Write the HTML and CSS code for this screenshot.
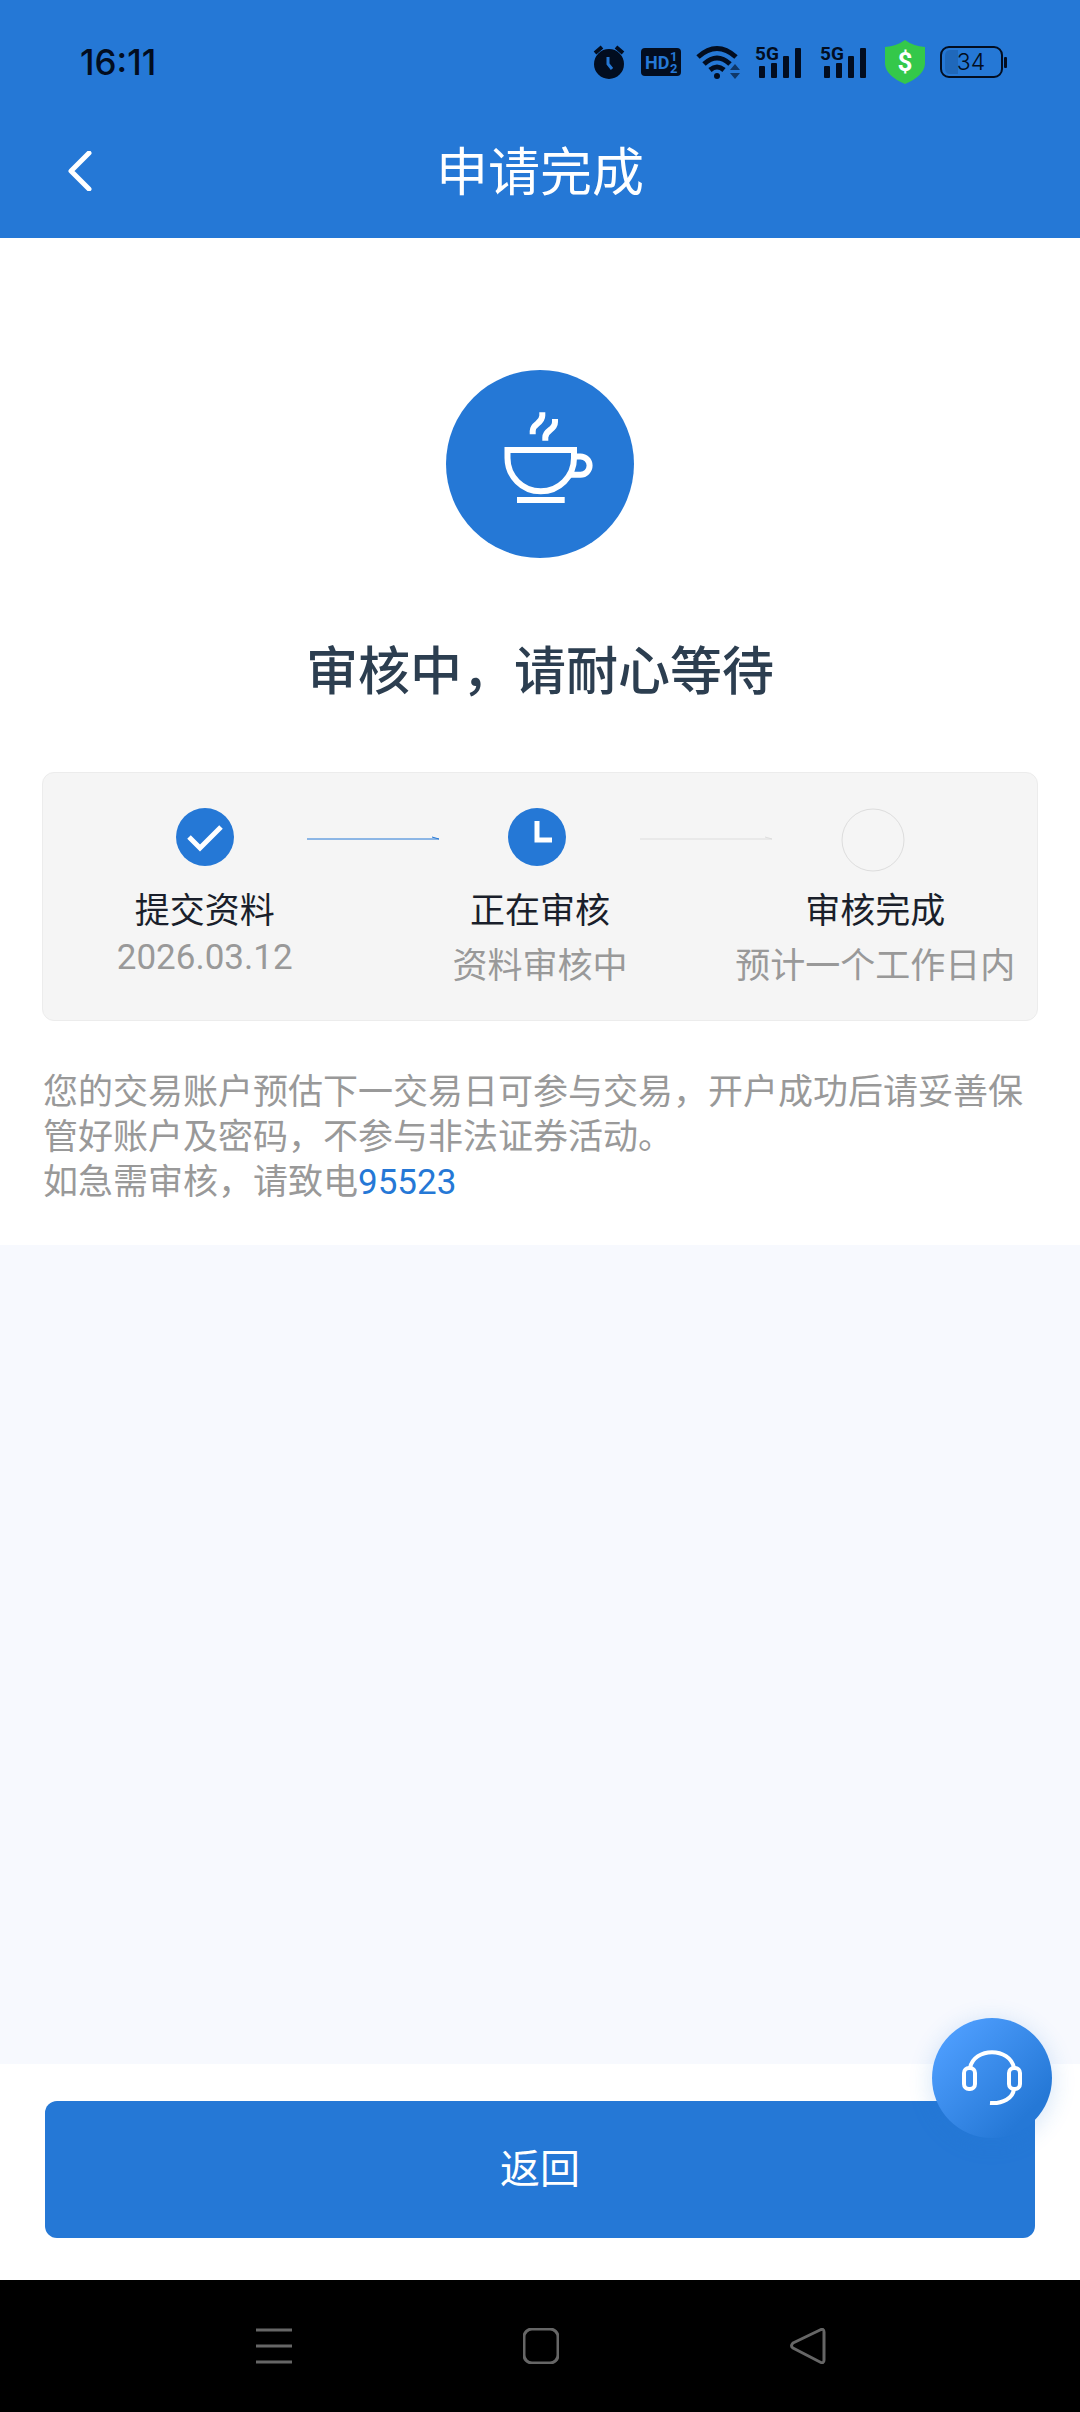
FILE: index.html
```html
<!DOCTYPE html>
<html lang="zh-CN">
<head>
  <meta charset="UTF-8" />
  <meta name="viewport" content="width=device-width, initial-scale=1.0"/>
  <title>申请完成</title>
  <link rel="stylesheet" href="styles.css">
</head>
<body>

  <header>
    <div class="status-bar">
      <span class="time">16:11</span>
      <div class="status-icons">
        <svg class="alarm" width="34" height="36" viewBox="0 0 34 36">
          <circle cx="17" cy="20" r="15"/>
          <path class="line" d="M3 9l7-6M31 9l-7-6" stroke-width="4"/>
          <path class="cut" d="M16 13v7l4 5" stroke-width="3"/>
        </svg>
        <svg class="hd" width="40" height="28" viewBox="0 0 40 28">
          <rect width="40" height="28" rx="4"/>
          <text class="cut-text" x="4" y="21" font-size="18">HD</text>
          <text class="cut-text" x="29" y="13" font-size="13">1</text>
          <text class="cut-text" x="29" y="25" font-size="13">2</text>
        </svg>
        <svg class="wifi" width="44" height="36" viewBox="0 0 44 36">
          <path class="line" d="M2 13Q21-4 40 13M8 20Q21 8 34 20M14 26Q21 20 28 26" stroke-width="5"/>
          <circle cx="21" cy="32" r="3"/>
          <path class="dim" d="M34 26l5-6 5 6zM34 29l5 6 5-6z"/>
        </svg>
        <svg class="signal" width="50" height="42" viewBox="0 -4 50 42">
          <text x="0" y="15" font-size="19">5G</text>
          <rect x="4" y="21" width="6" height="12" rx="1"/>
          <rect x="16" y="18" width="6" height="15" rx="1"/>
          <rect x="28" y="11" width="6" height="22" rx="1"/>
          <rect x="40" y="3" width="6" height="30" rx="1"/>
        </svg>
        <svg class="signal" width="50" height="42" viewBox="0 -4 50 42">
          <text x="0" y="15" font-size="19">5G</text>
          <rect x="4" y="21" width="6" height="12" rx="1"/>
          <rect x="16" y="18" width="6" height="15" rx="1"/>
          <rect x="28" y="11" width="6" height="22" rx="1"/>
          <rect x="40" y="3" width="6" height="30" rx="1"/>
        </svg>
        <svg class="shield" width="40" height="44" viewBox="0 0 40 44">
          <path d="M20 0Q28 6 40 7V24Q39 36 20 44Q1 36 0 24V7Q12 6 20 0Z"/>
          <text x="20" y="31" font-size="26" text-anchor="middle">$</text>
        </svg>
        <svg class="battery" width="68" height="32" viewBox="0 0 68 32">
          <path class="level" d="M10 4H18V28H10Q5 28 5 22V10Q5 4 10 4Z"/>
          <rect class="case" x="1" y="1" width="61" height="30" rx="8"/>
          <rect x="64" y="11" width="3" height="11" rx="1"/>
          <text x="31" y="24" font-size="23" text-anchor="middle">34</text>
        </svg>
      </div>
    </div>
    <div class="title-bar">
      <a class="back" href="#" aria-label="返回上一页">
        <svg width="24" height="40" viewBox="0 0 24 40">
          <path d="M21 2L3 20L21 38"/>
        </svg>
      </a>
      <h1>申请完成</h1>
    </div>
  </header>

  <main>
    <section class="result">
      <svg class="cup" width="188" height="188" viewBox="0 0 188 188">
        <circle cx="94" cy="94" r="94"/>
        <path d="M61.5 80H128V88A33.2 33.2 0 0 1 61.5 88Z"/>
        <path d="M128 86.5H134.5A9.1 9.1 0 0 1 134.5 104.7H124"/>
        <path d="M71 130H118.7"/>
        <path d="M86.7 64.3V61C86.7 53 96.3 54 96.3 45.5V42.3"/>
        <path d="M99.3 70.7V67.5C99.3 59.5 109 60.5 109 52V49"/>
      </svg>
      <h2>审核中，请耐心等待</h2>

      <div class="card">
        <div class="track">
          <svg class="mark" width="64" height="64" viewBox="0 0 64 64">
            <circle cx="30" cy="29" r="29"/>
            <path d="M14 29L25 40L46 19"/>
          </svg>
          <svg class="arrow" width="133" height="8" viewBox="0 0 133 8">
            <path d="M0 3H132L125 1"/>
          </svg>
          <svg class="mark" width="64" height="64" viewBox="0 0 64 64">
            <circle cx="29" cy="29" r="29"/>
            <path d="M29 13V32H44"/>
          </svg>
          <svg class="arrow next" width="133" height="8" viewBox="0 0 133 8">
            <path d="M0 3H132L125 1"/>
          </svg>
          <svg class="mark todo" width="64" height="64" viewBox="0 0 64 64">
            <circle cx="32" cy="32" r="31"/>
          </svg>
        </div>
        <ol class="steps">
          <li>
            <h3>提交资料</h3>
            <p>2026.03.12</p>
          </li>
          <li>
            <h3>正在审核</h3>
            <p>资料审核中</p>
          </li>
          <li>
            <h3>审核完成</h3>
            <p>预计一个工作日内</p>
          </li>
        </ol>
      </div>

      <p class="notice">您的交易账户预估下一交易日可参与交易，开户成功后请妥善保管好账户及密码，不参与非法证券活动。<br>如急需审核，请致电<a href="tel:95523">95523</a></p>
    </section>
  </main>

  <footer>
    <button class="return" type="button">返回</button>
    <button class="service" type="button" aria-label="在线客服">
      <svg width="120" height="120" viewBox="0 0 120 120">
        <rect x="32" y="50" width="11" height="21" rx="5"/>
        <rect x="77" y="50" width="11" height="21" rx="5"/>
        <path d="M38 50C42 29 78 29 82 50M82 71C81 80 71 86 58 85"/>
      </svg>
    </button>
  </footer>

  <nav>
    <button type="button" aria-label="最近任务">
      <svg width="36" height="36" viewBox="0 0 36 36">
        <path d="M0 2H36M0 18H36M0 34H36"/>
      </svg>
    </button>
    <button type="button" aria-label="主屏幕">
      <svg width="36" height="36" viewBox="0 0 36 36">
        <rect x="1" y="1" width="34" height="34" rx="8"/>
      </svg>
    </button>
    <button type="button" aria-label="返回">
      <svg width="36" height="36" viewBox="0 0 36 36">
        <path d="M3 15L30 2Q34 0 34 4V32Q34 36 30 34L3 20Q0 18 3 15Z"/>
      </svg>
    </button>
  </nav>

</body>
</html>
```
FILE: styles.css
```css
:root {
  --primary-color: #2578d6;
  --bg-color: #f7f9fe;
  --ink-color: #020d20;
  --muted-color: #999;
}
* {
  box-sizing: border-box;
}
body {
  margin: 0;
  min-height: 100vh;
  display: flex;
  flex-direction: column;
  font-family: Roboto, 'Noto Sans CJK SC', sans-serif;
  font-size: 35px;
  background-color: var(--bg-color);
}
h1, h2, h3, p {
  margin: 0;
  font-weight: 400;
}
svg {
  display: block;
  flex: none;
}
button {
  border: none;
  padding: 0;
  font-family: inherit;
  cursor: pointer;
}

/* header */
header {
  background: var(--primary-color);
  padding-top: 20px;
}
.status-bar {
  height: 84px;
  padding: 0 72px 0 80px;
  display: flex;
  justify-content: space-between;
  align-items: center;
}
.time {
  font-family: Inter, sans-serif;
  font-size: 35px;
  font-weight: 500;
  color: var(--ink-color);
}
.status-icons {
  display: flex;
  align-items: center;
  gap: 15px;
}
.status-icons svg {
  fill: var(--ink-color);
}
.status-icons text {
  font-family: Roboto, sans-serif;
  font-weight: 700;
}
.status-icons .line {
  fill: none;
  stroke: var(--ink-color);
}
.status-icons .cut {
  fill: none;
  stroke: var(--primary-color);
}
.status-icons .cut-text {
  fill: var(--primary-color);
}
.status-icons .dim {
  opacity: 0.6;
}
.status-icons .shield {
  fill: #34c84a;
}
.shield text {
  fill: white;
}
.battery .case {
  fill: none;
  stroke: var(--ink-color);
  stroke-width: 2;
}
.battery .level {
  opacity: 0.15;
}
.status-icons .battery text {
  font-family: Inter, sans-serif;
  font-weight: 300;
}
.title-bar {
  height: 134px;
  padding: 0 68px;
  display: grid;
  grid-template-columns: 1fr auto 1fr;
  align-items: center;
}
.back svg {
  fill: none;
  stroke: white;
  stroke-width: 5;
  stroke-linecap: round;
  stroke-linejoin: round;
}
h1 {
  padding-top: 6px;
  font-size: 52px;
  line-height: 72px;
  color: white;
}

/* result */
main {
  flex: 1;
}
.result {
  background: white;
  padding: 132px 42px 40px;
}
.cup {
  margin: 0 auto 79px;
  fill: none;
  stroke: white;
  stroke-width: 6;
}
.cup circle {
  fill: var(--primary-color);
  stroke: none;
}
h2 {
  font-size: 52px;
  font-weight: 500;
  line-height: 72px;
  text-align: center;
  color: #2c3e50;
}
.card {
  margin: 63px 0 49px;
  padding: 35px 0 32px;
  background: #f5f5f5;
  border: 1px solid #ececec;
  border-radius: 12px;
}
.track {
  display: flex;
  justify-content: center;
  align-items: center;
  gap: 68px;
}
.mark {
  fill: none;
  stroke: white;
  stroke-width: 5;
}
.mark circle {
  fill: var(--primary-color);
  stroke: none;
}
.mark.todo circle {
  fill: none;
  stroke: #ddd;
  stroke-width: 1;
}
.arrow {
  fill: none;
  stroke: var(--primary-color);
}
.arrow.next {
  stroke: #ddd;
}
.steps {
  margin: 15px 0 0;
  padding: 0;
  list-style: none;
  display: grid;
  grid-template-columns: repeat(3, 1fr);
  column-gap: 12px;
  text-align: center;
  white-space: nowrap;
}
.steps h3 {
  font-size: 35px;
  line-height: 50px;
  color: #1a1f2b;
}
.steps p {
  color: var(--muted-color);
}
.notice {
  padding: 0 1px;
  line-height: 45px;
  color: var(--muted-color);
}
.notice a {
  color: var(--primary-color);
  text-decoration: none;
}

/* bottom */
footer {
  position: relative;
  background: white;
  padding: 37px 45px 42px;
}
.return {
  display: block;
  width: 100%;
  height: 137px;
  padding-bottom: 8px;
  border-radius: 12px;
  background: var(--primary-color);
  color: white;
  font-size: 40px;
}
.service {
  position: absolute;
  top: -46px;
  right: 28px;
  border-radius: 50%;
  background: linear-gradient(135deg, #4f9fff 10%, #2578d6 80%);
  box-shadow: 0 4px 24px rgba(37, 120, 214, 0.2);
}
.service svg {
  fill: none;
  stroke: white;
  stroke-width: 4;
}
nav {
  height: 132px;
  padding-left: 2px;
  background: black;
  display: flex;
  justify-content: center;
  align-items: center;
  gap: 231px;
}
nav button {
  background: none;
}
nav svg {
  fill: none;
  stroke: #666;
  stroke-width: 3;
}
```
